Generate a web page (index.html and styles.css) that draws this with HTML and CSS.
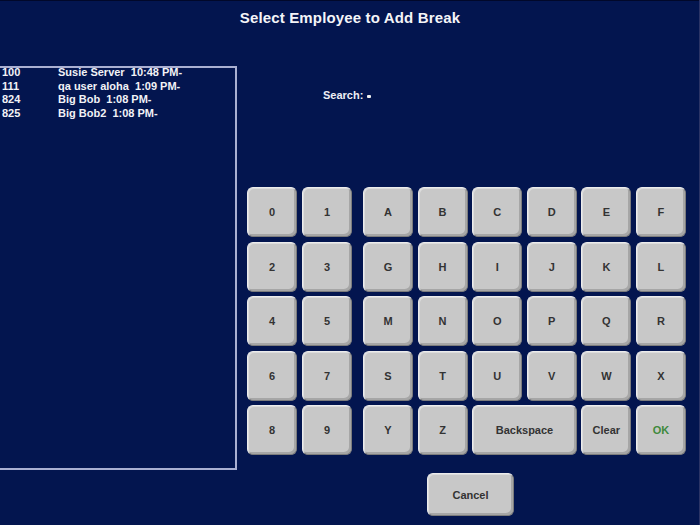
FILE: index.html
```html
<!DOCTYPE html>
<html>
<head>
<meta charset="utf-8">
<link rel="stylesheet" href="styles.css">
</head>
<body>
<div class="screen">
  <h1 class="title">Select Employee to Add Break</h1>
  <div class="main">
    <div class="list">
      <div class="rows">
        <div class="row"><span class="num">100</span><span class="name">Susie Server&nbsp; 10:48 PM-</span></div>
        <div class="row"><span class="num">111</span><span class="name">qa user aloha&nbsp; 1:09 PM-</span></div>
        <div class="row"><span class="num">824</span><span class="name">Big Bob&nbsp; 1:08 PM-</span></div>
        <div class="row"><span class="num">825</span><span class="name">Big Bob2&nbsp; 1:08 PM-</span></div>
      </div>
    </div>
    <div class="panel">
      <div class="search">Search: <span class="cursor"></span></div>
      <div class="keypad">
        <div class="nums">
          <button class="key">0</button><button class="key">1</button>
          <button class="key">2</button><button class="key">3</button>
          <button class="key">4</button><button class="key">5</button>
          <button class="key">6</button><button class="key">7</button>
          <button class="key">8</button><button class="key">9</button>
        </div>
        <div class="alpha">
          <button class="key">A</button><button class="key">B</button><button class="key">C</button><button class="key">D</button><button class="key">E</button><button class="key">F</button>
          <button class="key">G</button><button class="key">H</button><button class="key">I</button><button class="key">J</button><button class="key">K</button><button class="key">L</button>
          <button class="key">M</button><button class="key">N</button><button class="key">O</button><button class="key">P</button><button class="key">Q</button><button class="key">R</button>
          <button class="key">S</button><button class="key">T</button><button class="key">U</button><button class="key">V</button><button class="key">W</button><button class="key">X</button>
          <button class="key">Y</button><button class="key">Z</button><button class="key wide">Backspace</button><button class="key">Clear</button><button class="key ok">OK</button>
        </div>
      </div>
      <div class="actions"><button class="key cancel">Cancel</button></div>
    </div>
  </div>
</div>
</body>
</html>
```
FILE: styles.css
```css
html, body {
  margin: 0;
  padding: 0;
  background: #03154f;
}
.screen {
  width: 700px;
  height: 525px;
  overflow: hidden;
  background: #03154f;
  box-shadow: inset -1px 0 0 #2b3466, inset 0 1px 0 #01082a;
  font-family: "Liberation Sans", Arial, sans-serif;
  color: #ffffff;
  display: flex;
  flex-direction: column;
}
.title {
  margin: 0;
  padding-top: 9px;
  font-size: 15px;
  line-height: 18px;
  font-weight: bold;
  text-align: center;
  letter-spacing: 0.15px;
  color: #f4f4f8;
}
.main {
  display: flex;
  margin-top: 39px;
}
.list {
  box-sizing: border-box;
  width: 239px;
  height: 404px;
  margin-left: -2px;
  border: 2px solid #aab0d2;
  flex-shrink: 0;
}
.rows {
  margin-top: -2px;
  padding-left: 2px;
}
.row {
  display: flex;
  font-size: 11px;
  line-height: 13.5px;
  font-weight: bold;
  color: #f2f2f6;
}
.num {
  width: 56px;
}
.panel {
  display: flex;
  flex-direction: column;
}
.search {
  margin-top: 23px;
  margin-left: 86px;
  font-size: 11px;
  line-height: 13px;
  font-weight: bold;
  color: #eeeef4;
  display: flex;
  align-items: center;
}
.cursor {
  display: inline-block;
  width: 4px;
  height: 3px;
  margin-left: 4px;
  margin-top: 1px;
  background: #f0f0f0;
  border-radius: 1px;
}
.keypad {
  display: flex;
  gap: 11px;
  margin-top: 85px;
  margin-left: 10px;
}
.nums {
  display: grid;
  grid-template-columns: repeat(2, 50px);
  grid-auto-rows: 50px;
  column-gap: 5px;
  row-gap: 4.5px;
}
.alpha {
  display: grid;
  grid-template-columns: repeat(6, 50px);
  grid-auto-rows: 50px;
  column-gap: 4.6px;
  row-gap: 4.5px;
}
.key {
  box-sizing: border-box;
  margin: 0;
  padding: 0;
  width: 100%;
  height: 100%;
  background: #c8c8c8;
  border: 1px solid;
  border-color: #ececec #7c7c7c #7c7c7c #ececec;
  border-radius: 6px;
  box-shadow: inset -2px -2px 0 #a6a6a6, inset 1px 1px 0 #dcdcdc;
  font-family: "Liberation Sans", Arial, sans-serif;
  font-size: 11px;
  font-weight: bold;
  color: #333333;
}
.wide {
  grid-column: span 2;
}
.ok {
  color: #3f8a3c;
}
.actions {
  margin-top: 18px;
  margin-left: 190px;
}
.cancel {
  width: 87px;
  height: 43px;
}
```
